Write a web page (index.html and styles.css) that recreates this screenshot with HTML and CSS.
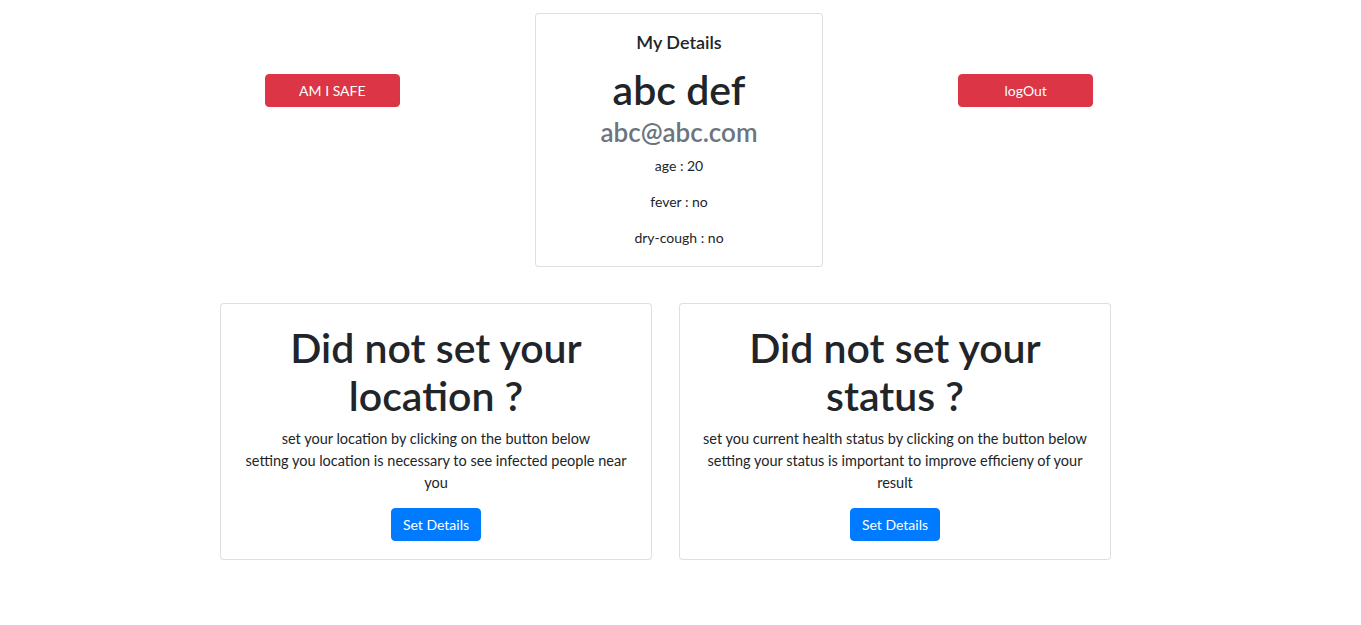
FILE: index.html
```html
<!DOCTYPE html>
<html>
<head>
<meta charset="utf-8">
<link rel="stylesheet" href="styles.css">
</head>
<body>
<div class="top">
  <div class="col">
    <button class="btn btn-danger btn-wide">AM I SAFE</button>
  </div>
  <div class="col">
    <div class="card details">
      <div class="card-body details-body">
        <h5 class="card-title">My Details</h5>
        <h1 class="name">abc def</h1>
        <h3 class="email">abc@abc.com</h3>
        <p class="card-text">age : 20</p>
        <p class="card-text">fever : no</p>
        <p class="card-text">dry-cough : no</p>
      </div>
    </div>
  </div>
  <div class="col">
    <button class="btn btn-danger btn-wide">logOut</button>
  </div>
</div>
<div class="bottom">
  <div class="card info">
    <div class="card-body info-body">
      <h1 class="big">Did not set your location ?</h1>
      <p class="info-text">set your location by clicking on the button below<br>setting you location is necessary to see infected people near you</p>
      <button class="btn btn-primary">Set Details</button>
    </div>
  </div>
  <div class="card info">
    <div class="card-body info-body">
      <h1 class="big">Did not set your status ?</h1>
      <p class="info-text">set you current health status by clicking on the button below<br>setting your status is important to improve efficieny of your result</p>
      <button class="btn btn-primary">Set Details</button>
    </div>
  </div>
</div>
</body>
</html>
```

FILE: styles.css
```css
* { box-sizing: border-box; }
body {
  margin: 0;
  padding-top: 13px;
  font-family: Lato, "Liberation Sans", sans-serif;
  color: #212529;
  background: #fff;
  font-size: 16px;
  line-height: 1.5;
}
h1, h3, h5 { margin: 0; font-weight: 600; }
p { margin: 0; font-weight: 400; }
.top {
  display: flex;
  width: 1040px;
  margin-left: 159px;
  align-items: flex-start;
}
.col {
  flex: 1 1 0;
  display: flex;
  justify-content: center;
}
.btn {
  font-family: inherit;
  border: 1px solid transparent;
  border-radius: 4px;
  color: #fff;
  font-size: 14px;
  line-height: 21px;
  padding: 5px 12px;
  cursor: pointer;
}
.btn-danger { background: #dc3545; border-color: #dc3545; }
.btn-primary { background: #007bff; border-color: #007bff; padding: 5px 11px; }
.btn-wide { width: 135px; margin-top: 61px; }
.card {
  border: 1px solid rgba(0,0,0,.125);
  border-radius: 4px;
  background: #fff;
}
.card-body { text-align: center; }
.details-body { padding: 17px 20px 18px; }
.info-body { padding: 20px 20px 18px; }
.details { width: 288px; }
.card-title { font-size: 18px; line-height: 22px; margin-bottom: 13px; }
.name { font-size: 41px; line-height: 48px; margin-bottom: 3px; }
.email { font-size: 26px; line-height: 30px; color: #6c757d; margin-bottom: 8px; }
.card-text { font-size: 14px; line-height: 21px; margin-bottom: 15px; }
.card-text:last-child { margin-bottom: 0; }
.bottom {
  display: flex;
  gap: 27px;
  padding-left: 220px;
  margin-top: 36px;
}
.info { width: 432px; }
.big { font-size: 41px; line-height: 48px; margin-bottom: 8px; }
.info-text { font-size: 14.5px; line-height: 22px; margin-bottom: 14px; }
```
